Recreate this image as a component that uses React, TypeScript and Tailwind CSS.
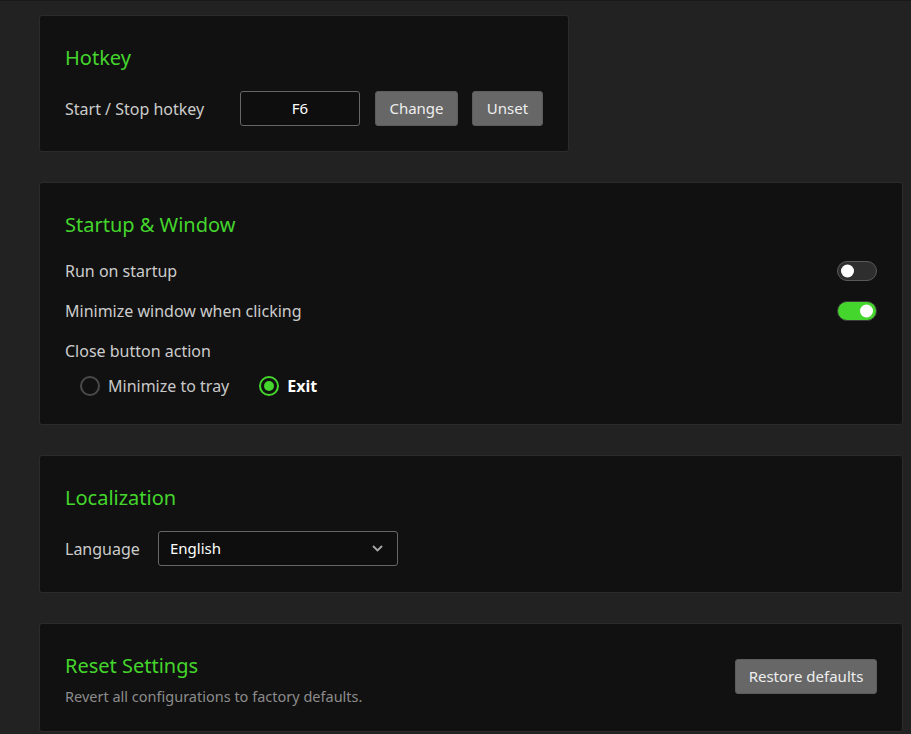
import React, { useState } from "react";

const font = { fontFamily: '"Segoe UI", "Noto Sans", "Open Sans", sans-serif' };

function Card({ children, className = "" }: { children: React.ReactNode; className?: string }) {
  return (
    <section
      className={`rounded-[3px] border border-[#2b2b2b] bg-[#111111] px-[25px] pt-[28px] ${className}`}
    >
      {children}
    </section>
  );
}

function Title({ children }: { children: React.ReactNode }) {
  return <h2 className="text-[20px] leading-7 text-[#44d62c]">{children}</h2>;
}

function Toggle({ on, onClick }: { on: boolean; onClick: () => void }) {
  return (
    <button
      onClick={onClick}
      className={`relative h-[20px] w-[40px] rounded-full border ${
        on ? "border-[#3a3a3a] bg-[#44d62c]" : "border-[#5a5a5a] bg-[#2e2e2e]"
      }`}
    >
      <span
        className={`absolute top-1/2 h-[13px] w-[13px] -translate-y-1/2 rounded-full bg-white ${
          on ? "right-[3px]" : "left-[3px]"
        }`}
      />
    </button>
  );
}

function Radio({ label, checked, onClick }: { label: string; checked: boolean; onClick: () => void }) {
  return (
    <button onClick={onClick} className="flex items-center gap-[8px]">
      <span
        className={`flex h-[20px] w-[20px] items-center justify-center rounded-full border-2 ${
          checked ? "border-[#44d62c]" : "border-[#4a4a4a]"
        }`}
      >
        {checked && <span className="h-[10px] w-[10px] rounded-full bg-[#44d62c]" />}
      </span>
      <span className={checked ? "font-bold text-white" : "text-[#c8c8c8]"}>{label}</span>
    </button>
  );
}

const btn =
  "h-[35px] rounded-[3px] border border-[#5c5c5c] bg-[#676767] text-[15px] text-[#eeeeee]";

export default function App() {
  const [startup, setStartup] = useState(false);
  const [minimize, setMinimize] = useState(true);
  const [closeAction, setCloseAction] = useState("exit");

  return (
    <div
      style={font}
      className="h-[734px] overflow-hidden border-t border-[#191919] bg-[#222222] pt-[14px] pl-[39px] pr-[8px] text-[16px] text-[#cccccc]"
    >
      <div className="flex flex-col gap-[30px]">
        {/* Hotkey */}
        <Card className="w-fit pb-[25px]">
          <Title>Hotkey</Title>
          <div className="mt-[19px] flex items-center">
            <span className="w-[175px]">Start / Stop hotkey</span>
            <div className="flex h-[35px] w-[120px] items-center justify-center rounded-[3px] border border-[#666666] bg-[#0e0e0e] text-[15px] text-white">
              F6
            </div>
            <button className={`${btn} ml-[15px] w-[83px]`}>Change</button>
            <button className={`${btn} ml-[14px] w-[71px]`}>Unset</button>
          </div>
        </Card>

        {/* Startup & Window */}
        <Card className="pb-[25px]">
          <Title>Startup &amp; Window</Title>
          <div className="mt-[12px] flex flex-col">
            <div className="flex h-10 items-center justify-between">
              <span>Run on startup</span>
              <Toggle on={startup} onClick={() => setStartup(!startup)} />
            </div>
            <div className="flex h-10 items-center justify-between">
              <span>Minimize window when clicking</span>
              <Toggle on={minimize} onClick={() => setMinimize(!minimize)} />
            </div>
            <div className="flex h-10 items-center">
              <span>Close button action</span>
            </div>
            <div className="mt-[2px] flex h-[26px] items-center gap-[30px] pl-[15px]">
              <Radio label="Minimize to tray" checked={closeAction === "tray"} onClick={() => setCloseAction("tray")} />
              <Radio label="Exit" checked={closeAction === "exit"} onClick={() => setCloseAction("exit")} />
            </div>
          </div>
        </Card>

        {/* Localization */}
        <Card className="pb-[26px]">
          <Title>Localization</Title>
          <div className="mt-[19px] flex items-center">
            <span className="w-[93px]">Language</span>
            <div className="flex h-[35px] w-[240px] items-center justify-between rounded-[3px] border border-[#666666] bg-[#0e0e0e] pl-[11px] pr-[14px] text-[15px] text-white">
              <span>English</span>
              <svg width="11" height="7" viewBox="0 0 11 7" fill="none">
                <path d="M1 1l4.5 4.5L10 1" stroke="#a8a8a8" strokeWidth="1.8" />
              </svg>
            </div>
          </div>
        </Card>

        {/* Reset */}
        <Card className="flex items-start justify-between pb-[25px]">
          <div>
            <Title>Reset Settings</Title>
            <p className="mt-[6px] text-[14.5px] leading-5 text-[#8c8c8c]">
              Revert all configurations to factory defaults.
            </p>
          </div>
          <button className={`${btn} mt-[7px] w-[142px]`}>Restore defaults</button>
        </Card>
      </div>
    </div>
  );
}
